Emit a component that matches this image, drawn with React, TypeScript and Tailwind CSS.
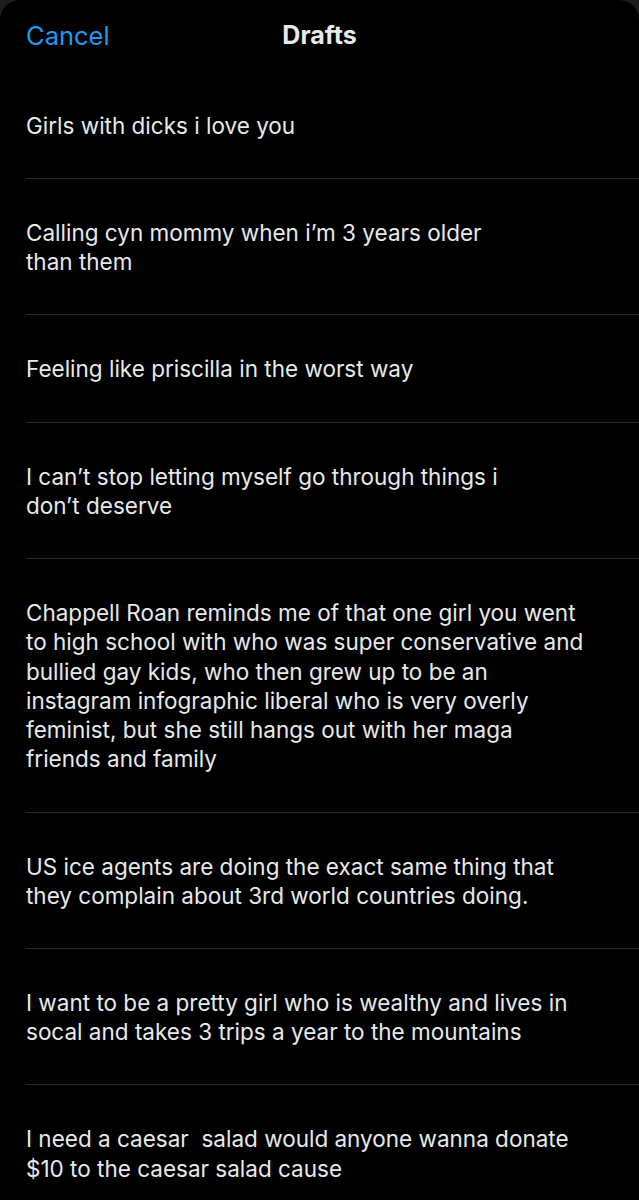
const drafts = [
  'Girls with dicks i love you',
  'Calling cyn mommy when i’m 3 years older\nthan them',
  'Feeling like priscilla in the worst way',
  'I can’t stop letting myself go through things i\ndon’t deserve',
  'Chappell Roan reminds me of that one girl you went\nto high school with who was super conservative and\nbullied gay kids, who then grew up to be an\ninstagram infographic liberal who is very overly\nfeminist, but she still hangs out with her maga\nfriends and family',
  'US ice agents are doing the exact same thing that\nthey complain about 3rd world countries doing.',
  'I want to be a pretty girl who is wealthy and lives in\nsocal and takes 3 trips a year to the mountains',
  'I need a caesar  salad would anyone wanna donate\n$10 to the caesar salad cause',
];

export default function App() {
  return (
    <div className="min-h-[1200px] bg-[#1c1c1e]" style={{ fontFamily: 'Inter, "Liberation Sans", sans-serif' }}>
      <div className="min-h-[1200px] overflow-hidden rounded-t-[20px] bg-black">
        <header className="relative flex h-[72px] items-center px-[26px]">
          <button className="text-[25.5px] text-[#1d9bf0]">Cancel</button>
          <h1 className="absolute left-1/2 -translate-x-1/2 text-[25px] font-bold text-[#e7e9ea]">Drafts</h1>
        </header>
        <ul className="pl-[26px]">
          {drafts.map((d, i) => (
            <li
              key={i}
              className="border-b border-[#2a2a2c] pt-[39px] pb-[37.8px] pr-[20px] text-[22.5px] leading-[29.3px] whitespace-pre-wrap text-[#e7e9ea] last:border-b-0"
            >
              {d}
            </li>
          ))}
        </ul>
      </div>
    </div>
  );
}
